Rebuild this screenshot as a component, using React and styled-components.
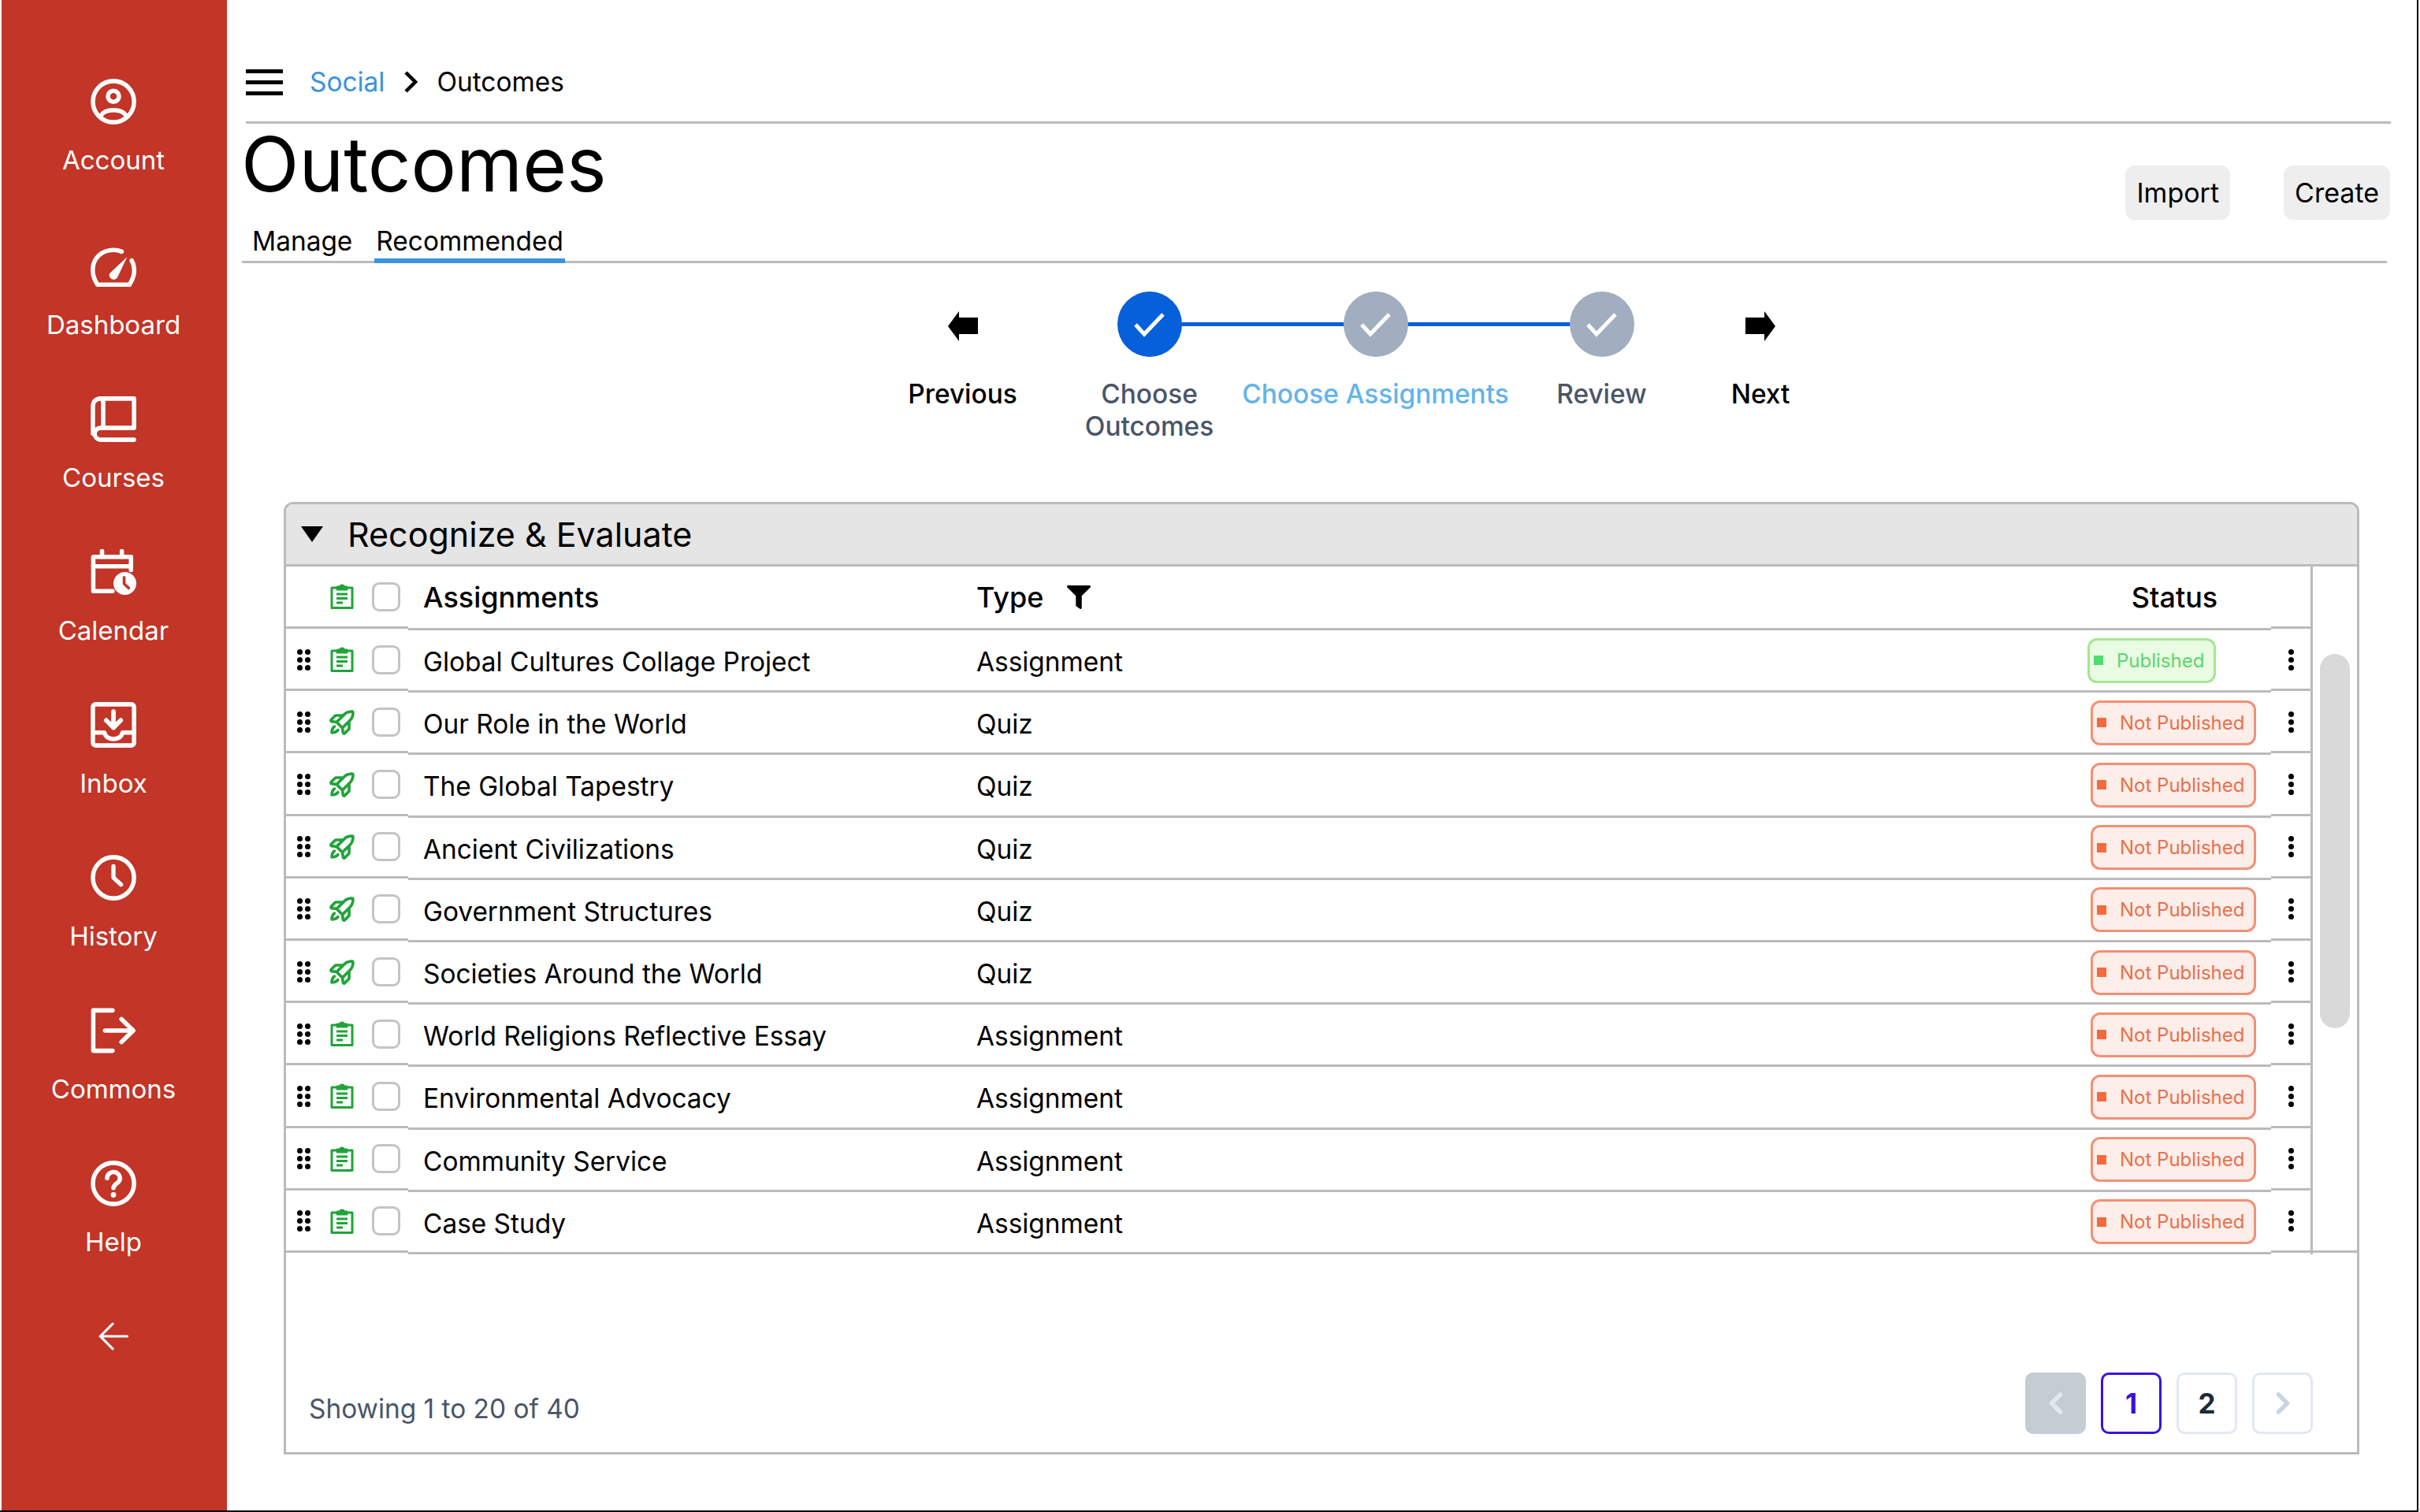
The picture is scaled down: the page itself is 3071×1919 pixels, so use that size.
import styled, { createGlobalStyle } from "styled-components";
import { PiRocketLaunchBold } from "react-icons/pi";
import { FaFilter } from "react-icons/fa";
import { ChevronLeft, ChevronRight } from "lucide-react";

const RED = "#c23527";

const rows = [
  { name: "Global Cultures Collage Project", type: "Assignment", published: true },
  { name: "Our Role in the World", type: "Quiz" },
  { name: "The Global Tapestry", type: "Quiz" },
  { name: "Ancient Civilizations", type: "Quiz" },
  { name: "Government Structures", type: "Quiz" },
  { name: "Societies Around the World", type: "Quiz" },
  { name: "World Religions Reflective Essay", type: "Assignment" },
  { name: "Environmental Advocacy", type: "Assignment" },
  { name: "Community Service", type: "Assignment" },
  { name: "Case Study", type: "Assignment" },
];

const NavSvg = ({ children, size = 58 }) => (
  <svg width={size} height={size} viewBox="0 0 24 24" fill="none" stroke="#fff" strokeWidth="2.3" strokeLinecap="round" strokeLinejoin="round">
    {children}
  </svg>
);

const navItems = [
  {
    label: "Account",
    icon: (
      <>
        <circle cx="12" cy="12" r="10.8" />
        <circle cx="12" cy="9.2" r="2.9" />
        <path d="M5.2 19.6C7.5 15.4 16.5 15.4 18.8 19.6" />
      </>
    ),
  },
  {
    label: "Dashboard",
    icon: (
      <>
        <path d="M20.4 21.6H3.6C2 19.2 1.1 16.5 1.1 14C1.1 7.6 6 3.4 12 3.4C13.6 3.4 15 3.7 16.3 4.3" />
        <path d="M21.6 9C22.5 10.5 22.9 12.2 22.9 14C22.9 16.5 22 19.2 20.4 21.6" />
        <path d="M19.2 7L14.2 17.6A2.3 2.3 0 0 1 10 15.7Z" fill="#fff" stroke="none" />
      </>
    ),
  },
  {
    label: "Courses",
    icon: (
      <>
        <path d="M5 1.2H22.8V16.6H5.2A3.1 3.1 0 0 0 5.2 22.8H22.8" />
        <path d="M1.2 19.6V5A3.8 3.8 0 0 1 5 1.2" />
        <path d="M6.6 1.2V16" />
        <circle cx="23.4" cy="19.7" r="1.6" fill={RED} stroke="none" />
      </>
    ),
  },
  {
    label: "Calendar",
    icon: (
      <>
        <path d="M11.5 22H1.4V4H21.2V11" />
        <path d="M1.4 9H21.2" />
        <path d="M6 1V4M16.4 1V4" />
        <circle cx="18" cy="18" r="6" fill="#fff" stroke="none" />
        <path d="M17.6 14.8V18.2L20 20.4" stroke={RED} strokeWidth="1.5" />
      </>
    ),
  },
  {
    label: "Inbox",
    icon: (
      <>
        <rect x="1.2" y="1.2" width="21.6" height="21.6" rx="1.4" />
        <path d="M1.2 16H7.2C7.8 18.4 9.6 19.4 12 19.4C14.4 19.4 16.2 18.4 16.8 16H22.8" />
        <path d="M12 5V13.4M8.2 9.6L12 13.4L15.8 9.6" strokeWidth="2.4" />
      </>
    ),
  },
  {
    label: "History",
    icon: (
      <>
        <circle cx="12" cy="12" r="10.8" />
        <path d="M12 6V12L16 15.6" strokeWidth="2.2" />
      </>
    ),
  },
  {
    label: "Commons",
    icon: (
      <>
        <path d="M11.5 1.4H1.4V22.6H11.5" />
        <path d="M7.6 12H22M16.2 6L22.4 12L16.2 18" />
      </>
    ),
  },
  {
    label: "Help",
    icon: (
      <>
        <circle cx="12" cy="12" r="10.8" />
        <path d="M8.6 9.2A3.4 3.4 0 0 1 15.4 9.6C15.4 11.8 12 12.2 12 14.4" />
        <circle cx="12" cy="18" r="1.4" fill="#fff" stroke="none" />
      </>
    ),
  },
];

const ClipboardIcon = () => (
  <svg width="30" height="32" viewBox="0 0 30 32" fill="none" stroke="#22a33a" strokeWidth="3" strokeLinejoin="round">
    <path d="M9 5H2V30.4H28V5H21" />
    <path d="M9 7V4H12.5A2.6 2.6 0 0 1 17.5 4H21V7Z" fill="#22a33a" />
    <path d="M8 13H22M8 18.5H22M8 24H16" />
  </svg>
);

const CheckIcon = () => (
  <svg width="40" height="32" viewBox="0 0 40 32" fill="none" stroke="#fff" strokeWidth="5">
    <path d="M2 16L13 28L37 3" />
  </svg>
);

const BlockArrow = ({ flip }) => (
  <ArrowSvg width="38" height="38" viewBox="0 0 38 38" fill="#000">
    <polygon points={flip ? "38,19 24,0 24,8 0,8 0,29 24,29 24,38" : "0,19 14,0 14,8 38,8 38,29 14,29 14,38"} />
  </ArrowSvg>
);

const Dots = ({ cols }) => (
  <DotGrid $cols={cols}>
    {Array.from({ length: cols * 3 }).map((_, i) => (
      <Dot key={i} />
    ))}
  </DotGrid>
);

const steps = [
  { label: "Choose Outcomes", done: true },
  { label: "Choose Assignments", active: true, line: true },
  { label: "Review", line: true },
];

const App = () => {
  return (
    <Page>
      <GlobalStyle />
      <Sidebar>
        {navItems.map((item) => (
          <NavItem key={item.label}>
            <NavSvg>{item.icon}</NavSvg>
            <NavLabel>{item.label}</NavLabel>
          </NavItem>
        ))}
        <BackButton>
          <NavSvg size={38}>
            <path d="M23 12H1.4M11.4 2L1.4 12L11.4 22" strokeWidth="2" />
          </NavSvg>
        </BackButton>
      </Sidebar>

      <Main>
        <Crumbs>
          <Hamburger>
            <span />
            <span />
            <span />
          </Hamburger>
          <CrumbLink>Social</CrumbLink>
          <CrumbChevron>
            <svg width="18" height="28" viewBox="0 0 18 28" fill="none" stroke="#000" strokeWidth="4.5">
              <path d="M3 2L15 14L3 26" />
            </svg>
          </CrumbChevron>
          <CrumbText>Outcomes</CrumbText>
        </Crumbs>

        <TitleRow>
          <Title>Outcomes</Title>
          <Actions>
            <ActionButton>Import</ActionButton>
            <ActionButton>Create</ActionButton>
          </Actions>
        </TitleRow>

        <Tabs>
          <Tab>Manage</Tab>
          <Tab $active>Recommended</Tab>
        </Tabs>

        <Stepper>
          <StepNav>
            <StepIconSlot>
              <BlockArrow />
            </StepIconSlot>
            <NavText>Previous</NavText>
          </StepNav>
          {steps.map((step) => (
            <Step key={step.label}>
              <StepIconSlot>
                {step.line && <StepLine />}
                <StepCircle $done={step.done}>
                  <CheckIcon />
                </StepCircle>
              </StepIconSlot>
              <StepLabel $active={step.active}>{step.label}</StepLabel>
            </Step>
          ))}
          <StepNav>
            <StepIconSlot>
              <BlockArrow flip />
            </StepIconSlot>
            <NavText>Next</NavText>
          </StepNav>
        </Stepper>

        <Card>
          <CardHeader>
            <Triangle />
            <CardTitle>Recognize &amp; Evaluate</CardTitle>
          </CardHeader>

          <TableWrap>
            <Table>
              <HeadRow>
                <Cell $short />
                <Cell $short>
                  <ClipboardIcon />
                </Cell>
                <Cell $short>
                  <Checkbox />
                </Cell>
                <HeadCell>Assignments</HeadCell>
                <HeadCell $gap>
                  Type
                  <FaFilter size={30} color="#000" />
                </HeadCell>
                <StatusHead>Status</StatusHead>
                <Cell $short />
              </HeadRow>
              {rows.map((row) => (
                <Row key={row.name}>
                  <Cell $short>
                    <Dots cols={2} />
                  </Cell>
                  <Cell $short>
                    {row.type === "Quiz" ? <PiRocketLaunchBold size={39} color="#22a33a" /> : <ClipboardIcon />}
                  </Cell>
                  <Cell $short>
                    <Checkbox />
                  </Cell>
                  <TextCell>{row.name}</TextCell>
                  <TextCell>{row.type}</TextCell>
                  <BadgeCell>
                    <Badge $published={row.published}>
                      <BadgeMark $published={row.published} />
                      {row.published ? "Published" : "Not Published"}
                    </Badge>
                  </BadgeCell>
                  <Cell $short>
                    <Dots cols={1} />
                  </Cell>
                </Row>
              ))}
            </Table>
            <ScrollTrack>
              <ScrollThumb />
            </ScrollTrack>
          </TableWrap>

          <CardFooter>
            <Showing>Showing 1 to 20 of 40</Showing>
            <Pager>
              <PageButton $disabled>
                <ChevronLeft size={44} color="#e2e8f0" strokeWidth={3} />
              </PageButton>
              <PageButton $current>1</PageButton>
              <PageButton>2</PageButton>
              <PageButton>
                <ChevronRight size={44} color="#cbd5e0" strokeWidth={3} />
              </PageButton>
            </Pager>
          </CardFooter>
        </Card>
      </Main>
    </Page>
  );
};

export default App;

// css
const GlobalStyle = createGlobalStyle`
  html, body {
    margin: 0;
    padding: 0;
    background: #fff;
  }
  * {
    box-sizing: border-box;
  }
  body {
    font-family: Inter, "Liberation Sans", sans-serif;
    color: #000;
  }
`;

const Page = styled.div`
  display: flex;
  width: 3069px;
  height: 1919px;
  padding-left: 2px;
  border-right: 2px solid #000;
  border-bottom: 2px solid #000;
  overflow: hidden;
`;

const Sidebar = styled.nav`
  flex: 0 0 286px;
  display: flex;
  flex-direction: column;
  align-items: center;
  gap: 71px;
  padding: 100px 2px 0 0;
  background: ${RED};
`;

const NavItem = styled.div`
  display: flex;
  flex-direction: column;
  align-items: center;
  gap: 25px;

  &:first-child {
    margin-bottom: 15px;
  }

  svg {
    display: block;
  }
`;

const NavLabel = styled.span`
  font-size: 33px;
  line-height: 40px;
  color: #fff;
`;

const BackButton = styled.div`
  margin-top: 10px;

  svg {
    display: block;
  }
`;

const Main = styled.main`
  flex: 1;
  min-width: 0;
`;

const Crumbs = styled.div`
  display: flex;
  align-items: center;
  width: 2722px;
  height: 157px;
  margin-left: 24px;
  padding-top: 84px;
  padding-bottom: 30px;
  border-bottom: 3px solid #bbb;
`;

const Hamburger = styled.div`
  display: flex;
  flex-direction: column;
  justify-content: space-between;
  width: 47px;
  height: 33px;
  margin-right: 34px;

  span {
    display: block;
    height: 5px;
    background: #000;
  }
`;

const CrumbLink = styled.span`
  font-size: 33.4px;
  line-height: 40px;
  color: #3b93dc;
`;

const CrumbChevron = styled.span`
  display: flex;
  margin: 0 24px 0 24px;
`;

const CrumbText = styled.span`
  font-size: 33.4px;
  line-height: 40px;
`;

const TitleRow = styled.div`
  display: flex;
  justify-content: space-between;
  align-items: flex-start;
  width: 2727px;
  height: 96px;
  margin: 3px 0 0 18px;
`;

const Title = styled.h1`
  margin: 0;
  font-size: 96px;
  line-height: 96px;
  font-weight: 400;
`;

const Actions = styled.div`
  display: flex;
  gap: 68px;
  margin-top: 50px;
`;

const ActionButton = styled.button`
  height: 69px;
  padding: 0 14px;
  border: none;
  border-radius: 12px;
  background: #eee;
  font-family: inherit;
  font-size: 34px;
  color: #000;
`;

const Tabs = styled.div`
  display: flex;
  gap: 26px;
  width: 2722px;
  height: 48px;
  margin: 30px 0 0 19px;
  padding-left: 11px;
  border-bottom: 3px solid #bbb;
`;

const Tab = styled.div`
  height: 48px;
  padding: 0 2px;
  font-size: 33.4px;
  line-height: 40px;
  border-bottom: ${(props) => (props.$active ? "6px solid #3b93dc" : "none")};
`;

const Stepper = styled.div`
  display: grid;
  grid-template-columns: 187px 287px 287px 287px 116px;
  margin: 36px 0 0 840px;
  height: 267px;
`;

const StepNav = styled.div`
  display: flex;
  flex-direction: column;
  align-items: center;
`;

const Step = styled(StepNav)``;

const StepIconSlot = styled.div`
  position: relative;
  display: flex;
  align-items: center;
  justify-content: center;
  align-self: stretch;
  height: 83px;
  margin-bottom: 27px;
`;

const ArrowSvg = styled.svg`
  margin-top: 4px;
`;

const StepLine = styled.div`
  position: absolute;
  top: 39px;
  right: 50%;
  width: 287px;
  height: 5px;
  background: #0560d9;
`;

const StepCircle = styled.div`
  position: relative;
  z-index: 1;
  display: flex;
  align-items: center;
  justify-content: center;
  width: 82px;
  height: 83px;
  border-radius: 50%;
  background: ${(props) => (props.$done ? "#0560d9" : "#a0aec0")};
`;

const NavText = styled.div`
  font-size: 33.4px;
  line-height: 40px;
  font-weight: 500;
`;

const StepLabel = styled.div`
  max-width: 180px;
  font-size: 33.4px;
  line-height: 40.5px;
  font-weight: 500;
  text-align: center;
  color: ${(props) => (props.$active ? "#63b3ed" : "#4a5568")};
  ${(props) => props.$active && "max-width: none; white-space: nowrap;"}
`;

const Card = styled.section`
  display: flex;
  flex-direction: column;
  width: 2634px;
  height: 1209px;
  margin: 0 0 0 72px;
  border: 3px solid #bbb;
  border-radius: 12px 12px 0 0;
`;

const CardHeader = styled.div`
  display: flex;
  align-items: center;
  height: 76px;
  padding-left: 19px;
  background: #e5e5e5;
  border-radius: 9px 9px 0 0;
  flex: 0 0 auto;
`;

const Triangle = styled.div`
  width: 0;
  height: 0;
  margin-right: 31px;
  border-left: 14px solid transparent;
  border-right: 14px solid transparent;
  border-top: 20px solid #000;
`;

const CardTitle = styled.div`
  font-size: 43px;
  line-height: 50px;
`;

const TableWrap = styled.div`
  display: flex;
  border-top: 3px solid #bbb;
`;

const Table = styled.div`
  width: 2572px;
  border-right: 3px solid #bbb;
`;

const Row = styled.div`
  display: grid;
  grid-template-columns: 44px 54px 57px 702px 1417px 245px 51px;
  height: 79.2px;
`;

const HeadRow = styled(Row)`
  height: 81px;
`;

const Cell = styled.div`
  display: flex;
  align-items: center;
  justify-content: center;
  border-bottom: 3px solid #bbb;
  margin-bottom: ${(props) => (props.$short ? "2px" : "0")};
`;

const TextCell = styled.div`
  display: flex;
  align-items: center;
  padding: 4px 0 0 19px;
  font-size: 33.4px;
  border-bottom: 3px solid #bbb;
`;

const HeadCell = styled(TextCell)`
  font-size: 36px;
  font-weight: 500;
  padding-top: 0;
  gap: ${(props) => (props.$gap ? "30px" : "0")};
`;

const StatusHead = styled(HeadCell)`
  justify-content: center;
  padding-left: 0;
`;

const BadgeCell = styled.div`
  display: flex;
  align-items: center;
  padding-left: 14px;
  border-bottom: 3px solid #bbb;
`;

const Badge = styled.div`
  display: flex;
  align-items: center;
  gap: 17px;
  height: 57px;
  margin-left: ${(props) => (props.$published ? "-2px" : "2px")};
  padding: 0 12px 0 5px;
  border: 3px solid ${(props) => (props.$published ? "#a6e692" : "#f29076")};
  border-radius: 12px;
  background: ${(props) => (props.$published ? "#e9fbe2" : "#fdeee9")};
  color: ${(props) => (props.$published ? "#5cd66e" : "#e8704e")};
  font-size: 24px;
`;

const BadgeMark = styled.span`
  width: 12px;
  height: 12px;
  background: ${(props) => (props.$published ? "#4fdc6c" : "#f56a3c")};
`;

const DotGrid = styled.div`
  display: grid;
  grid-template-columns: repeat(${(props) => props.$cols}, 7px);
  gap: 3px;
`;

const Dot = styled.span`
  width: 7px;
  height: 7px;
  border-radius: 50%;
  background: #000;
`;

const Checkbox = styled.span`
  width: 36px;
  height: 37px;
  border: 3px solid #c4c4c4;
  border-radius: 9px;
  background: #fff;
`;

const ScrollTrack = styled.div`
  flex: 1;
  margin-bottom: 2px;
  padding: 111px 0 0 9px;
  border-bottom: 3px solid #bbb;
`;

const ScrollThumb = styled.div`
  width: 38px;
  height: 475px;
  border-radius: 19px;
  background: #d9d9d9;
`;

const CardFooter = styled.div`
  flex: 1;
  display: flex;
  justify-content: space-between;
  align-items: flex-end;
  padding: 0 56px 23px 29px;
`;

const Showing = styled.div`
  margin-bottom: 12px;
  font-size: 33.4px;
  line-height: 40px;
  color: #4a5568;
`;

const Pager = styled.div`
  display: flex;
  gap: 19px;
`;

const PageButton = styled.div`
  display: flex;
  align-items: center;
  justify-content: center;
  width: 77px;
  height: 78px;
  border-radius: 10px;
  border: 3px solid ${(props) => (props.$disabled ? "#c5ccd4" : props.$current ? "#3b0fe0" : "#e2e8f0")};
  background: ${(props) => (props.$disabled ? "#c5ccd4" : "#fff")};
  color: ${(props) => (props.$current ? "#3b0fe0" : "#1f2937")};
  font-size: 35px;
  font-weight: 700;
`;
